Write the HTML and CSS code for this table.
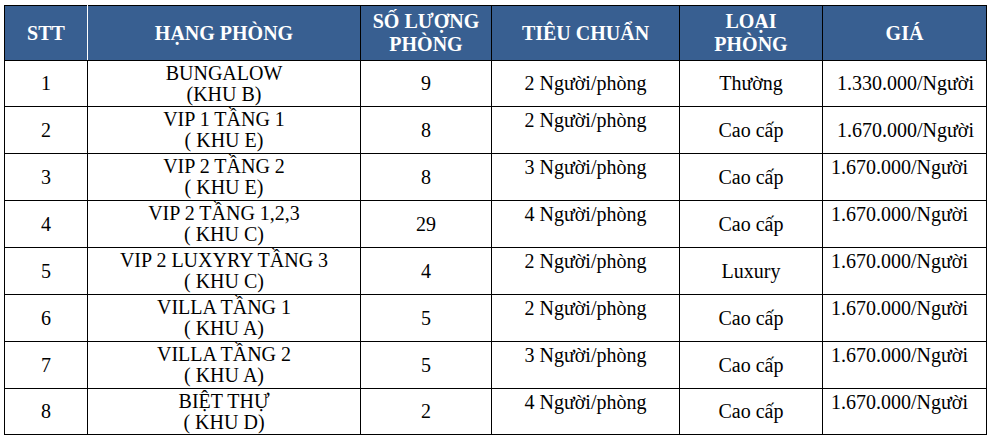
FILE: index.html
```html
<!DOCTYPE html>
<html lang="vi">
<head>
<meta charset="utf-8">
<title>Bảng giá phòng</title>
<link rel="stylesheet" href="styles.css">
</head>
<body>
<table class="rooms">
  <colgroup>
    <col class="c-stt">
    <col class="c-name">
    <col class="c-qty">
    <col class="c-std">
    <col class="c-type">
    <col class="c-price">
  </colgroup>
  <thead>
    <tr class="head">
      <th class="th-stt">STT</th>
      <th>HẠNG PHÒNG</th>
      <th>SỐ LƯỢNG<br>PHÒNG</th>
      <th>TIÊU CHUẨN</th>
      <th>LOẠI<br>PHÒNG</th>
      <th>GIÁ</th>
    </tr>
  </thead>
  <tbody>
    <tr class="r46">
      <td class="mid">1</td>
      <td class="name">BUNGALOW<br>(KHU B)</td>
      <td class="mid">9</td>
      <td class="mid">2 Người/phòng</td>
      <td class="mid">Thường</td>
      <td class="mid price-r">1.330.000/Người</td>
    </tr>
    <tr class="r47">
      <td class="mid">2</td>
      <td class="name">VIP 1 TẦNG 1<br>( KHU E)</td>
      <td class="mid">8</td>
      <td class="top">2 Người/phòng</td>
      <td class="mid">Cao cấp</td>
      <td class="mid price-r">1.670.000/Người</td>
    </tr>
    <tr class="r47">
      <td class="mid">3</td>
      <td class="name">VIP 2 TẦNG 2<br>( KHU E)</td>
      <td class="mid">8</td>
      <td class="top">3 Người/phòng</td>
      <td class="mid">Cao cấp</td>
      <td class="top price-l">1.670.000/Người</td>
    </tr>
    <tr class="r47">
      <td class="mid">4</td>
      <td class="name">VIP 2 TẦNG 1,2,3<br>( KHU C)</td>
      <td class="mid">29</td>
      <td class="top">4 Người/phòng</td>
      <td class="mid">Cao cấp</td>
      <td class="top price-l">1.670.000/Người</td>
    </tr>
    <tr class="r47">
      <td class="mid">5</td>
      <td class="name">VIP 2 LUXYRY TẦNG 3<br>( KHU C)</td>
      <td class="mid">4</td>
      <td class="top">2 Người/phòng</td>
      <td class="mid">Luxury</td>
      <td class="top price-l">1.670.000/Người</td>
    </tr>
    <tr class="r47">
      <td class="mid">6</td>
      <td class="name">VILLA TẦNG 1<br>( KHU A)</td>
      <td class="mid">5</td>
      <td class="top">2 Người/phòng</td>
      <td class="mid">Cao cấp</td>
      <td class="top price-l">1.670.000/Người</td>
    </tr>
    <tr class="r47">
      <td class="mid">7</td>
      <td class="name">VILLA TẦNG 2<br>( KHU A)</td>
      <td class="mid">5</td>
      <td class="top">3 Người/phòng</td>
      <td class="mid">Cao cấp</td>
      <td class="top price-l">1.670.000/Người</td>
    </tr>
    <tr class="r46">
      <td class="mid">8</td>
      <td class="name">BIỆT THỰ<br>( KHU D)</td>
      <td class="mid">2</td>
      <td class="top">4 Người/phòng</td>
      <td class="mid">Cao cấp</td>
      <td class="top price-l">1.670.000/Người</td>
    </tr>
  </tbody>
</table>
</body>
</html>
```

FILE: styles.css
```css
html, body {
  margin: 0;
  padding: 0;
  background: #ffffff;
}

body {
  font-family: "Liberation Serif", "Times New Roman", serif;
  font-size: 20px;
  color: #000000;
}

.rooms {
  margin: 5px 0 0 4px;
  width: 982px;
  table-layout: fixed;
  border-collapse: collapse;
}

.c-stt { width: 83px; }
.c-name { width: 273px; }
.c-qty { width: 131px; }
.c-std { width: 188px; }
.c-type { width: 143px; }
.c-price { width: 164px; }

.rooms th,
.rooms td {
  border: 1px solid #000000;
  padding: 0;
  line-height: 21px;
  text-align: center;
  white-space: nowrap;
}

.head {
  height: 55px;
}

.rooms th {
  background: #385f91;
  color: #ffffff;
  font-weight: bold;
  vertical-align: middle;
  line-height: 23px;
}

.rooms th.th-stt {
  border-right-color: #ffffff;
}

.r46 { height: 46px; }
.r47 { height: 47px; }

.rooms td.mid {
  vertical-align: middle;
}

.rooms td.name {
  vertical-align: top;
  padding-top: 2px;
}

.rooms td.top {
  vertical-align: top;
  padding-top: 3px;
}

.rooms td.price-r {
  text-align: right;
  padding-right: 12px;
}

.rooms td.price-l {
  text-align: left;
  padding-left: 8px;
}
```
